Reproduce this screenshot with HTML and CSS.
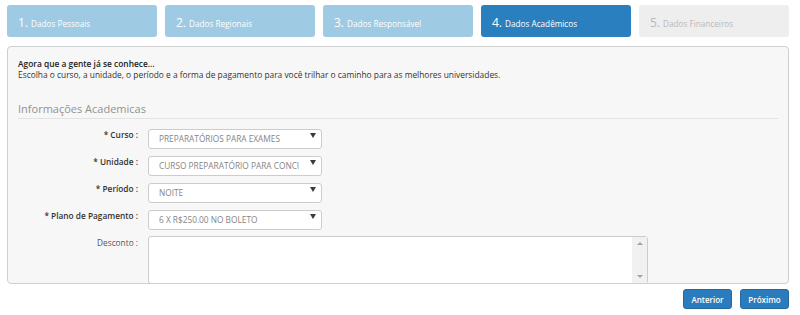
FILE: index.html
```html
<!DOCTYPE html>
<html lang="pt-BR">
<head>
    <meta charset="UTF-8">
    <meta name="viewport" content="width=device-width, initial-scale=1.0">
    <title>Matrícula || Dados Acadêmicos</title>
    <link rel="stylesheet" href="styles.css">
</head>
<body>
<div class="wizard">
    <div class="passos">
        <div class="passo feito"><span class="num">1.</span> Dados Pessoais</div>
        <div class="passo feito"><span class="num">2.</span> Dados Regionais</div>
        <div class="passo feito"><span class="num">3.</span> Dados Responsável</div>
        <div class="passo atual"><span class="num">4.</span> Dados Acadêmicos</div>
        <div class="passo"><span class="num">5.</span> Dados Financeiros</div>
    </div>

    <div class="painel">
        <p class="intro"><b>Agora que a gente já se conhece...</b><br>
        Escolha o curso, a unidade, o período e a forma de pagamento para você trilhar o caminho para as melhores universidades.</p>

        <h3 class="titulo">Informações Academicas</h3>

        <div class="form">
            <label class="rotulo obr">* Curso :</label>
            <div class="combo">
                <select><option>PREPARATÓRIOS PARA EXAMES</option></select>
            </div>

            <label class="rotulo obr">* Unidade :</label>
            <div class="combo">
                <select><option>CURSO PREPARATÓRIO PARA CONCURSOS</option></select>
            </div>

            <label class="rotulo obr">* Período :</label>
            <div class="combo">
                <select><option>NOITE</option></select>
            </div>

            <label class="rotulo obr">* Plano de Pagamento :</label>
            <div class="combo">
                <select><option>6 X R$250.00 NO BOLETO</option></select>
            </div>

            <label class="rotulo desc">Desconto :</label>
            <div class="area">
                <textarea id="desconto"></textarea>
                <!-- barra de rolagem desenhada, o navegador usa overlay -->
                <div class="barra"><span class="seta cima"></span><span class="seta baixo"></span></div>
            </div>
        </div>
    </div>

    <div class="botoes">
        <button class="btn">Anterior</button>
        <button class="btn">Próximo</button>
    </div>
</div>
</body>
</html>
```

FILE: styles.css
```css
* {
    margin: 0;
    padding: 0;
    box-sizing: border-box;
}

body {
    font-family: "Open Sans", "DejaVu Sans", sans-serif;
    background: #fff;
    color: #333;
}

.wizard {
    width: 782px;
    margin: 5px 0 0 7px;
}

/* abas do topo */
.passos {
    display: flex;
    gap: 8px;
    height: 32px;
}

.passo {
    flex: 1;
    display: flex;
    align-items: baseline;
    gap: 3px;
    padding: 9px 11px 0;
    border-radius: 3px;
    background-color: #eeeeee;
    color: #b9b9b9;
    font-size: 8.2px;
}
.passo .num {
    font-size: 12px;
}
.passo.feito {
    background-color: #9ecae3;
    color: #fff;
}
.passo.atual {
    background-color: #2a80be;
    color: #fff;
}

/* painel do formulario */
.painel {
    margin-top: 9px;
    height: 238px;
    overflow: hidden;
    padding: 11px 10px 0;
    background-color: #f7f7f7;
    border: 1px solid #cfcfcf;
    border-radius: 4px;
}

.intro {
    font-size: 8.4px;
    line-height: 11px;
    color: #333;
}
.intro b {
    font-weight: 600;
    color: #222;
}

.titulo {
    margin-top: 22px;
    padding-bottom: 2px;
    border-bottom: 1px solid #e3e3e3;
    font-size: 11px;
    line-height: 14px;
    font-weight: 400;
    color: #929292;
}

.form {
    margin-top: 6px;
    display: grid;
    grid-template-columns: 120px auto;
    column-gap: 10px;
    row-gap: 7px;
    justify-content: start;
}

.rotulo {
    font-size: 8.3px;
    line-height: 20px;
    text-align: right;
    color: #333;
}
.rotulo.obr {
    font-weight: 600;
}
.rotulo.desc {
    color: #555;
    margin-top: 2px;
    line-height: 16px;
}

.combo {
    position: relative;
    width: 174px;
    height: 20px;
}
.combo select {
    appearance: none;
    -webkit-appearance: none;
    width: 100%;
    height: 20px;
    padding: 0 22px 0 10px;
    border: 1px solid #cccccc;
    border-radius: 3px;
    background: #fff;
    font-family: "Open Sans", "DejaVu Sans", sans-serif;
    font-size: 8.3px;
    color: #858585;
}
.combo::after {
    content: "";
    position: absolute;
    right: 6px;
    top: 8px;
    border-left: 3px solid transparent;
    border-right: 3px solid transparent;
    border-top: 5px solid #3a3a3a;
    pointer-events: none;
}

.area {
    position: relative;
    margin-top: 3px;
    width: 500px;
    height: 48px;
}
#desconto {
    display: block;
    width: 100%;
    height: 100%;
    resize: none;
    overflow: hidden;
    border: 1px solid #cccccc;
    border-radius: 3px;
    background: #fff;
}
.barra {
    position: absolute;
    top: 1px;
    right: 1px;
    bottom: 1px;
    width: 15px;
    display: flex;
    flex-direction: column;
    justify-content: space-between;
    align-items: center;
    padding: 5px 0 5px;
    background-color: #f1f1f1;
}
.seta {
    border-left: 3px solid transparent;
    border-right: 3px solid transparent;
}
.seta.cima {
    border-bottom: 3px solid #a3a3a3;
}
.seta.baixo {
    border-top: 3px solid #a3a3a3;
}

.botoes {
    display: flex;
    justify-content: flex-end;
    gap: 8px;
    margin-top: 5px;
}

.btn {
    width: 49px;
    height: 20px;
    border: 1px solid #2468a0;
    border-radius: 3px;
    background-color: #2b7cbc;
    color: #fff;
    font-family: "Open Sans", "DejaVu Sans", sans-serif;
    font-size: 8px;
    font-weight: 600;
}
```
